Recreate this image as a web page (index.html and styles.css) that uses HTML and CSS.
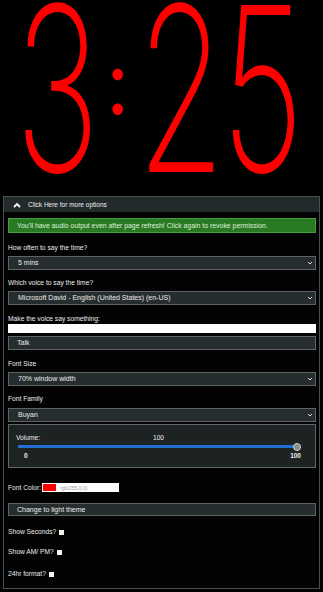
FILE: index.html
```html
<!DOCTYPE html>
<html>
<head>
<meta charset="utf-8">
<link rel="stylesheet" href="styles.css">
</head>
<body>
<div class="clock">
  <span class="ch digit d1"><span class="g">3</span></span>
  <span class="ch colon"><span class="g">:</span></span>
  <span class="ch digit d2"><span class="g">2</span></span>
  <span class="ch digit d3"><span class="g">5</span></span>
</div>
<div class="panel">
  <div class="panel-head">
    <svg class="chev" width="8" height="6" viewBox="0 0 8 6"><polyline points="1,5 4,2 7,5" fill="none" stroke="#fff" stroke-width="1.8"/></svg>
    <span>Click Here for more options</span>
  </div>
  <div class="panel-body">
    <div class="alert">You'll have audio output even after page refresh! Click again to revoke permission.</div>

    <div class="group g1">
      <div class="label">How often to say the time?</div>
      <div class="sel"><select><option>5 mins</option></select><svg class="arr" width="6" height="4" viewBox="0 0 6 4"><polyline points="1,1 3,3 5,1" fill="none" stroke="#ddd" stroke-width="1"/></svg></div>
    </div>

    <div class="group g2">
      <div class="label">Which voice to say the time?</div>
      <div class="sel"><select><option>Microsoft David - English (United States) (en-US)</option></select><svg class="arr" width="6" height="4" viewBox="0 0 6 4"><polyline points="1,1 3,3 5,1" fill="none" stroke="#ddd" stroke-width="1"/></svg></div>
    </div>

    <div class="group g3">
      <div class="label tight">Make the voice say something:</div>
      <input class="say" type="text">
      <button class="btn talk">Talk</button>
    </div>

    <div class="group g4">
      <div class="label">Font Size</div>
      <div class="sel"><select><option>70% window width</option></select><svg class="arr" width="6" height="4" viewBox="0 0 6 4"><polyline points="1,1 3,3 5,1" fill="none" stroke="#ddd" stroke-width="1"/></svg></div>
    </div>

    <div class="group g5">
      <div class="label">Font Family</div>
      <div class="sel"><select><option>Buyan</option></select><svg class="arr" width="6" height="4" viewBox="0 0 6 4"><polyline points="1,1 3,3 5,1" fill="none" stroke="#ddd" stroke-width="1"/></svg></div>
    </div>

    <div class="volume">
      <div class="vol-top"><span class="vl">Volume:</span><span class="vol-val">100</span><span class="vr"></span></div>
      <input class="range" type="range" min="0" max="100" value="100">
      <div class="vol-scale"><span>0</span><span>100</span></div>
    </div>

    <div class="color-row">
      <span class="label-inline">Font Color:</span>
      <div class="color-input"><span class="swatch"></span><span class="rgb">rgb(255,0,0)</span></div>
    </div>

    <button class="btn theme">Change to light theme</button>

    <label class="check c1">Show Seconds? <span class="box"></span></label>
    <label class="check c2">Show AM/ PM? <span class="box"></span></label>
    <label class="check c3">24hr format? <span class="box"></span></label>
  </div>
</div>
</body>
</html>
```
FILE: styles.css
```css
* { box-sizing: border-box; }
html, body {
  margin: 0;
  padding: 0;
  background: #000;
}
body {
  font-family: "Liberation Sans", Arial, sans-serif;
  font-size: 6.7px;
  line-height: 10px;
  color: #e8e8e8;
  width: 323px;
  height: 592px;
  overflow: hidden;
}
.clock {
  height: 196px;
  display: flex;
  justify-content: flex-start;
  align-items: flex-start;
  padding-left: 25px;
}
.ch {
  display: flex;
  justify-content: center;
  align-items: center;
  height: 177px;
}
.digit { width: 65px; }
.colon { width: 8px; margin: 0 26px 0 24px; }
.d3 { margin-left: 16.5px; }
.g {
  display: block;
  font-family: "Inter", sans-serif;
  font-weight: 170;
  font-size: 230px;
  line-height: 177px;
  color: #ff0000;
  transform: scale(0.62, 1);
}
.colon .g {
  font-family: "Inter", sans-serif;
  font-weight: 400;
  font-size: 88px;
  line-height: 88px;
  transform: translateY(-7px) scale(0.9, 1);
}

.panel {
  margin: 0 3px;
  border: 1px solid #4a4f50;
  background: #030303;
}
.panel-head {
  height: 15px;
  background: #222a2b;
  display: flex;
  align-items: center;
  gap: 7px;
  padding-left: 9px;
  font-size: 6.5px;
  color: #f0f0f0;
}
.chev { display: block; }
.panel-body {
  padding: 6px 3px 9px 4px;
}
.alert {
  height: 15px;
  line-height: 13px;
  background: #2a7a24;
  border: 1px solid #4a9a44;
  color: #dff3dc;
  font-size: 6.9px;
  padding-left: 8px;
  margin-bottom: 10px;
}
.label {
  line-height: 10px;
  margin-bottom: 3px;
  color: #ececec;
}
.label.tight { margin-bottom: 0; }
.g1 { margin-bottom: 8px; }
.g2 { margin-bottom: 9px; }
.g3 { margin-bottom: 9px; }
.g4 { margin-bottom: 8px; }
.g5 { margin-bottom: 2px; }
.g5 .label { margin-bottom: 4px; }
.sel {
  position: relative;
  height: 14px;
}
.sel select {
  appearance: none;
  -webkit-appearance: none;
  display: block;
  width: 100%;
  height: 14px;
  margin: 0;
  background: #262d2e;
  border: 1px solid #5d6465;
  border-radius: 0;
  color: #ececec;
  font-family: "Liberation Sans", Arial, sans-serif;
  font-size: 7px;
  line-height: 12px;
  padding: 0 0 0 9px;
  outline: none;
}
.arr {
  position: absolute;
  right: 3px;
  top: 5px;
}
.say {
  display: block;
  width: 100%;
  height: 9px;
  margin: 0 0 3px 0;
  border: none;
  background: #fff;
  padding: 0;
}
.btn {
  display: block;
  width: 100%;
  height: 14px;
  margin: 0;
  background: #262d2e;
  border: 1px solid #5d6465;
  border-radius: 0;
  color: #ececec;
  font-family: "Liberation Sans", Arial, sans-serif;
  font-size: 7px;
  line-height: 12px;
  text-align: left;
  padding: 0 0 0 8px;
}
.volume {
  height: 44px;
  background: #1d2223;
  border: 1px solid #60676a;
  padding: 8px 14px 0 7px;
}
.vol-top {
  display: flex;
  justify-content: space-between;
  line-height: 9px;
  color: #ececec;
}
.vol-top span { width: 60px; }
.vol-top .vol-val { text-align: center; }
.range {
  -webkit-appearance: none;
  appearance: none;
  display: block;
  width: calc(100% - 2px);
  height: 3px;
  margin: 3px 0 0 2px;
  background: #1e6fd0;
  outline: none;
}
.range::-webkit-slider-runnable-track {
  height: 3px;
  background: #1e6fd0;
}
.range::-webkit-slider-thumb {
  -webkit-appearance: none;
  width: 8px;
  height: 8px;
  margin-top: -2.5px;
  border-radius: 50%;
  background: #8a8a8a;
  border: 1px solid #d0d0d0;
}
.vol-scale {
  display: flex;
  justify-content: space-between;
  font-size: 6.5px;
  font-weight: bold;
  line-height: 9px;
  margin-top: 3px;
  padding: 0 0 0 8px;
  color: #f0f0f0;
}
.color-row {
  display: flex;
  align-items: center;
  margin-top: 15px;
  height: 9px;
}
.label-inline { margin-right: 1px; }
.color-input {
  width: 77px;
  height: 9px;
  background: #fff;
  display: flex;
  align-items: center;
}
.swatch {
  width: 13px;
  height: 7px;
  margin-left: 1px;
  background: #ff0000;
}
.rgb {
  font-size: 5px;
  color: #999;
  margin-left: 4px;
}
.theme {
  margin-top: 11px;
  height: 13px;
  line-height: 11px;
}
.check {
  display: flex;
  align-items: center;
  gap: 3px;
  height: 10px;
  line-height: 10px;
  color: #ececec;
}
.c1 { margin-top: 11px; }
.c2 { margin-top: 10px; }
.c3 { margin-top: 12px; }
.box {
  display: inline-block;
  width: 5px;
  height: 5px;
  background: #f4f4f4;
}
```
